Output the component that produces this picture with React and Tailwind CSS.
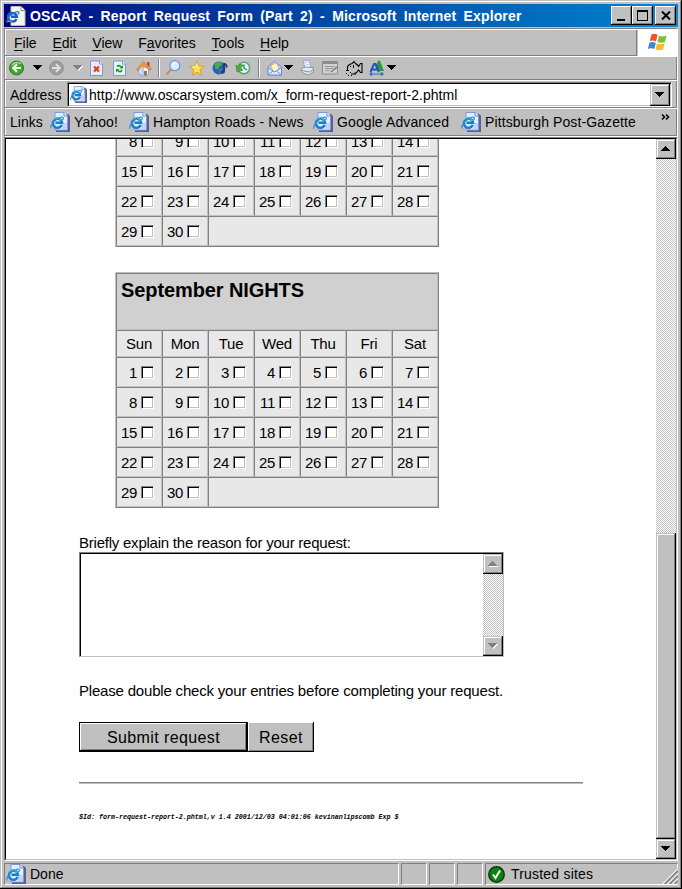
const RAISED =
  "bg-[#c0c0c0] shadow-[inset_-1px_-1px_#000,inset_1px_1px_#c0c0c0,inset_-2px_-2px_#808080,inset_2px_2px_#fff]";
const DITHER =
  "bg-[conic-gradient(#c0c0c0_25%,#fff_0_50%,#c0c0c0_0_75%,#fff_0)] bg-[length:2px_2px]";

function PageIcon({ className = "", size = 20 }) {
  return (
    <svg className={`block shrink-0 ${className}`} width={size} height={size} viewBox="0 0 20 20">
      <path d="M8 2h10l2 2v16H6v-3z" fill="#5d5d91" />
      <path d="M5 .5h9l3.500 3.500v14H5z" fill="#e4efff" stroke="#7b9be0" />
      <path d="M12 11h5v6.500h-5z" fill="#c3d3f8" />
      <path d="M14 .5V4h3.500" fill="#fff" stroke="#6b86d6" />
      <circle cx="7.200" cy="11" r="5.800" fill="#d8f0ff" opacity=".8" />
      <path d="M11.700 12.900a4.600 4.600 0 1 1 .3-2.200H5.500" fill="none" stroke="#1c7cc4" strokeWidth="2.500" />
      <path d="M11.200 8.900a4.700 4.700 0 0 0-8.400-.6" fill="none" stroke="#4fbdf0" strokeWidth="1.200" />
      <path d="M1 16.500C-.4 13 7 5.500 12 5c2 0 1.500 2 .4 3" fill="none" stroke="#2d8fd8" strokeWidth="1.200" />
    </svg>
  );
}

function Triangle({ className = "", up = false, color = "#000", lit = false, w = 9 }) {
  const h = (w + 1) / 2;
  const d = up ? `M0 ${h}h${w}L${w / 2} 0z` : `M0 0h${w}L${w / 2} ${h}z`;
  return (
    <svg className={`block shrink-0 ${className}`} width={w + 1} height={h + 1} shapeRendering="crispEdges">
      {lit && <path d={d} fill="#fff" transform="translate(1 1)" />}
      <path d={d} fill={color} />
    </svg>
  );
}

function ToolIcon({ className = "", w = 16, children }) {
  return (
    <svg className={`block shrink-0 ${className}`} width={w} height="16" viewBox={`0 0 ${w} 16`} fill="none">
      {children}
    </svg>
  );
}

function Separator({ className = "" }) {
  return <div className={`h-[18px] w-[2px] shrink-0 border-l border-[#808080] bg-white ${className}`} />;
}

function TitleBar() {
  const btn =
    "flex h-[19px] items-center justify-center bg-[#c0c0c0] shadow-[inset_-1px_-1px_#000,inset_1px_1px_#fff,inset_-2px_-2px_#808080]";
  return (
    <div className="flex h-[23px] items-center bg-linear-to-r from-[#000080] to-[#1084d0] pr-[2px]">
      <svg className="ml-[2px] block shrink-0" width="20" height="20" viewBox="0 0 20 20">
        <path d="M5 .5h10l4 4v15H5z" fill="#f6f6f0" stroke="#b8b8a8" />
        <path d="M15 .5v4h4" fill="#fff" stroke="#8a8a80" />
        <circle cx="6.500" cy="11" r="5.200" fill="#e8f4ff" />
        <path d="M10.500 12.900a4.300 4.300 0 1 1 .3-2.200H5" stroke="#1560c4" strokeWidth="2.500" fill="none" />
        <path d="M.7 16c-1-3 6-10 11-10.500 2 0 1 2 .3 3" stroke="#2a70d8" strokeWidth="1.200" fill="none" />
        <path d="M1 16l3-1 3 2" stroke="#e8a020" strokeWidth="1" fill="none" />
      </svg>
      <div className="ml-1 grow pt-px text-[14px] leading-5 font-bold tracking-[0.15px] whitespace-nowrap text-white [word-spacing:3.2px]">
        OSCAR - Report Request Form (Part 2) - Microsoft Internet Explorer
      </div>
      <div className={`w-[21px] ${btn}`}>
        <div className="mt-[9px] mr-[2px] h-[2px] w-[8px] bg-black" />
      </div>
      <div className={`w-[21px] ${btn}`}>
        <div className="h-[11px] w-[11px] border border-t-2 border-black" />
      </div>
      <div className={`ml-[2px] w-[21px] ${btn}`}>
        <svg width="10" height="9" viewBox="0 0 10 9">
          <path d="M1 .5l8 8M9 .5l-8 8" stroke="#000" strokeWidth="2" />
        </svg>
      </div>
    </div>
  );
}

function MenuBar() {
  const items = [
    ["", "F", "ile"],
    ["", "E", "dit"],
    ["", "V", "iew"],
    ["F", "a", "vorites"],
    ["", "T", "ools"],
    ["", "H", "elp"],
  ];
  return (
    <div className="flex h-[26px] justify-between">
      <div className="flex grow items-center gap-[15.8px] border-r border-b border-[#808080] pt-[2px] pl-[9px] text-[14px]">
        {items.map(([a, u, b]) => (
          <span key={u + b}>
            {a}
            <span className="underline underline-offset-2">{u}</span>
            {b}
          </span>
        ))}
      </div>
      <div className="ml-px flex w-[39px] items-center justify-center bg-white pb-[3px]">
        <svg width="21" height="18" viewBox="0 0 21 18">
          <path d="M4.500 1.500Q8 0 10.500 2L9 8.500Q6 7 2.800 8z" fill="#ee5426" />
          <path d="M12 2.800q3 1.500 7.500 0L18 9q-3.500 1.500-7.500 0z" fill="#7cbf3a" />
          <path d="M2.500 9.500Q6 8.200 8.800 10l-1.500 6Q4 14.500.8 16z" fill="#4384dd" />
          <path d="M10 10.500q3.500 1.500 7.700 0l-1.500 5.700q-3.500 1.800-7.700 0z" fill="#f7bd28" />
        </svg>
      </div>
    </div>
  );
}

function ToolBar() {
  return (
    <div className="flex h-[24px] items-center border-t border-b border-t-white border-b-[#808080] pl-[4px]">
      <ToolIcon>
        <circle cx="7.500" cy="8" r="7" fill="#3fa82d" stroke="#257a1b" />
        <path d="M3 5a6 6 0 0 1 9-1" stroke="#a3df8e" strokeWidth="1.500" />
        <path d="M12 8H4.500M8 4.200L4.200 8 8 11.800" stroke="#fff" strokeWidth="2" />
      </ToolIcon>
      <Triangle className="ml-[8px]" />
      <ToolIcon className="ml-[6px]">
        <circle cx="7.500" cy="8" r="6.800" fill="#a0a0a0" stroke="#8a8a8a" />
        <path d="M3 8h7.500M7 4.200L10.800 8 7 11.800" stroke="#e2e2e2" strokeWidth="1.800" />
      </ToolIcon>
      <Triangle className="ml-[8px]" color="#808080" lit />
      <ToolIcon className="ml-[7px]" w={14}>
        <path d="M.5 1h9l3 3v11.500H.5z" fill="#e3edff" stroke="#7999d8" />
        <path d="M9.500 1v3h3" fill="#fff" stroke="#7999d8" />
        <path d="M4 6.500l5 5M9 6.500l-5 5" stroke="#e63a16" strokeWidth="2.200" />
      </ToolIcon>
      <ToolIcon className="ml-[9px]" w={14}>
        <path d="M.5 1h9l3 3v11.500H.5z" fill="#e3f5ee" stroke="#7999d8" />
        <path d="M9.500 1v3h3" fill="#fff" stroke="#7999d8" />
        <path d="M4 6.500Q6 4.500 8 7M9 10q-2 3-4 .5" stroke="#129a28" strokeWidth="1.600" />
        <path d="M6.500 8.500H10V5zM6.500 9H3v3.500z" fill="#129a28" />
      </ToolIcon>
      <ToolIcon className="ml-[9px]">
        <path d="M11 2h2.500v5H11z" fill="#c44532" />
        <path d="M7 6.500l5.500 2V15L6 16z" fill="#f9fbff" stroke="#90a9dc" />
        <path d="M2 9l5-5v12l-4-2z" fill="#d2e0fb" stroke="#90a9dc" />
        <path d="M.5 9.500L7.500 1.500l8 7.500-2 1-6-5L2 11z" fill="#f59a37" stroke="#d36a1a" strokeWidth=".6" />
        <path d="M8 11h3v4.500H8z" fill="#a9713f" />
      </ToolIcon>
      <Separator className="ml-[6px]" />
      <ToolIcon className="ml-[5px]">
        <path d="M1.500 14.500l4.500-5" stroke="#c3926a" strokeWidth="2.600" />
        <circle cx="9.800" cy="5.700" r="5" fill="#d7eefe" stroke="#6f97de" strokeWidth="1.300" />
        <path d="M7.500 5a3 3 0 0 1 3-2" stroke="#fff" strokeWidth="1.500" />
      </ToolIcon>
      <ToolIcon className="ml-[8px]">
        <path d="M8 .8l2 5.200 5.300.2-4.200 3.500 1.600 5.500L8 12.200l-4.700 3 1.600-5.500L.7 6.200 6 6z" fill="#fee152" stroke="#e2a01a" />
        <path d="M8 3.500L6.800 7l-3.500.2" stroke="#fffbd0" />
      </ToolIcon>
      <ToolIcon className="ml-[7px]">
        <circle cx="7" cy="8" r="6.500" fill="#2460bd" />
        <path d="M2.500 4.500Q5 1 9 2l1 3-3 1.500-.5 3-3-.5zM8 9l3.500 1-2 3.800-2.500-1z" fill="#47af3f" />
        <path d="M12 12V3.500q3 1 2.800 4" stroke="#252b78" strokeWidth="1.400" />
        <ellipse cx="10.500" cy="12" rx="2.400" ry="1.800" fill="#323891" />
      </ToolIcon>
      <ToolIcon className="ml-[7px]">
        <circle cx="8.800" cy="8" r="5.800" fill="#e1f4f5" stroke="#60a668" strokeWidth="1.500" />
        <path d="M9 4.500V8l3 2" stroke="#436687" strokeWidth="1.200" />
        <path d="M1 5l1 7 6-2-2-1.500Q6 6 9 5.500L5 4 3.500 7z" fill="#50ad45" stroke="#2f8731" strokeWidth=".6" />
      </ToolIcon>
      <Separator className="ml-[7px]" />
      <ToolIcon className="ml-[7px]">
        <path d="M1 7l6.500-6 7 6v8H1z" fill="#b6d0fb" stroke="#6c90d8" />
        <path d="M4 5l6-2 2 7-6 2z" fill="#fff7d0" stroke="#e6a754" strokeWidth=".8" />
        <path d="M1 7.500L7.500 12l7-4.500V15H1z" fill="#deebff" stroke="#6c90d8" />
        <path d="M1 15l5-4M14.500 15l-5-4" stroke="#6c90d8" />
      </ToolIcon>
      <Triangle className="ml-px" />
      <ToolIcon className="ml-[6px]">
        <path d="M3 1l6-.5 2 6.500-6 1z" fill="#fff" stroke="#85a5df" />
        <path d="M4 3l4-.5M5 5l4-.5" stroke="#9fbaf0" strokeWidth=".8" />
        <path d="M1 9l4-2 8 .5.5 4.500-5 3L2 12.500z" fill="#e5e9f2" stroke="#8890a5" />
        <path d="M2 10.500l7 1.500 4-2" stroke="#8890a5" />
        <path d="M9 12.500l3-1.500" stroke="#e8b64c" strokeWidth="1.200" />
      </ToolIcon>
      <ToolIcon className="ml-[6px]">
        <path d="M.5 1.500h15V14H.5z" fill="#d2d2d2" stroke="#8c8c8c" />
        <path d="M1 3h14" stroke="#8c8c8c" strokeWidth="2" />
        <path d="M3 6.500h10M3 8.500h8M3 10.500h5" stroke="#9a9a9a" />
        <path d="M15 7l-6 5" stroke="#777" strokeWidth="1.500" />
      </ToolIcon>
      <ToolIcon className="ml-[7px]" w={18}>
        <path
          d="M2.500 10V6.500l2-2L7 3.500l2-2 1.500 2 2 1.500 1 1.500 2-3h1.500v9h-1.500l-2-2.500-2 2.500-2.500 1.500H6"
          stroke="#000"
          strokeWidth="1.100"
        />
        <path
          d="M5 6.500h1M8.500 5v3M1 10.500h3M1 13.500h1M3 15.500h1M6 15.500h1M5 12.500h1M9 13l2 1.500"
          stroke="#000"
        />
      </ToolIcon>
      <ToolIcon className="ml-[6px]" w={16}>
        <path d="M6.500 7L9 .8h2L15 11h-4z" fill="#2f9a36" />
        <path d="M1.500 12L5 4h1.500L10 12M3 9.500h6" stroke="#1b54c4" strokeWidth="2" />
        <path d="M1 14h13M3 12.300L1 14l2 1.700M12 12.300l2 1.700-2 1.700" stroke="#2a6cca" strokeWidth="1.200" />
      </ToolIcon>
      <Triangle className="ml-[2px]" />
    </div>
  );
}

function AddressBar() {
  return (
    <div className="flex h-[28px] border-t border-b border-t-white border-b-[#808080] pt-px pl-[5px] text-[14px]">
      <div className="w-[57px] pt-[4px] leading-[18px]">
        A<span className="underline underline-offset-2">d</span>dress
      </div>
      <div className="flex h-[25px] w-[605px] items-center border border-t-[#808080] border-r-white border-b-white border-l-[#808080] bg-white pr-px shadow-[inset_1px_1px_#000,inset_-1px_-1px_#c0c0c0]">
        <PageIcon className="ml-[2px]" size={17} />
        <div className="ml-[2px] grow pt-[2px] tracking-[0.02px]">http://www.oscarsystem.com/x_form-request-report-2.phtml</div>
        <div className={`mt-px flex h-[22px] w-[20px] items-center justify-center ${RAISED}`}>
          <Triangle />
        </div>
      </div>
    </div>
  );
}

function LinksBar() {
  const link = "tracking-[0.1px] whitespace-nowrap";
  return (
    <div className="flex h-[28px] items-center border-t border-b border-t-white border-b-[#808080] pl-[5px] text-[14px]">
      <span className="w-[40px]">Links</span>
      <PageIcon />
      <span className={`ml-[4px] w-[55px] ${link}`}>Yahoo!</span>
      <PageIcon />
      <span className={`ml-[4px] w-[160px] ${link}`}>Hampton Roads - News</span>
      <PageIcon />
      <span className={`ml-[4px] w-[124px] ${link}`}>Google Advanced</span>
      <PageIcon />
      <span className={`ml-[4px] w-[176px] ${link}`}>Pittsburgh Post-Gazette</span>
      <svg className="mb-[11px] block" width="10" height="6" viewBox="0 0 10 6">
        <path d="M1 .5L3.500 3 1 5.500M5 .5L7.500 3 5 5.500" fill="none" stroke="#000" strokeWidth="1.500" />
      </svg>
    </div>
  );
}

const CELL = "border border-t-[#808080] border-r-[#c0c0c0] border-b-[#c0c0c0] border-l-[#808080]";
const FRAME =
  "ml-[36px] w-[324px] border border-t-[#c0c0c0] border-r-[#808080] border-b-[#808080] border-l-[#c0c0c0] bg-[#e8e8e8]";

function Day({ n }) {
  return (
    <div className={`flex h-[30px] justify-end pt-[8px] pr-[7px] ${CELL}`}>
      <span className="mr-[4px] text-[15px] leading-[13px] tracking-[-0.3px]">{n}</span>
      <span className="block h-[13px] w-[13px] border border-t-[#808080] border-r-white border-b-white border-l-[#808080] bg-white shadow-[inset_1px_1px_#000,inset_-1px_-1px_#c0c0c0]" />
    </div>
  );
}

function Days({ from }) {
  const days = Array.from({ length: 31 - from }, (_, i) => from + i);
  return (
    <div className="grid grid-cols-7">
      {days.map((n) => (
        <Day key={n} n={n} />
      ))}
      <div className={`col-span-5 h-[30px] ${CELL}`} />
    </div>
  );
}

function Page() {
  return (
    <div className="grow overflow-hidden bg-white pl-[73px] text-[15px]">
      <div className={`-mt-[13px] border-t-0 ${FRAME}`}>
        <Days from={8} />
      </div>
      <div className={`mt-[25px] ${FRAME}`}>
        <div className={`h-[57px] bg-[#d0d0d0] pt-[4px] pl-[4px] text-[20px] leading-6 font-bold tracking-[-0.1px] ${CELL}`}>
          September NIGHTS
        </div>
        <div className="grid grid-cols-7">
          {["Sun", "Mon", "Tue", "Wed", "Thu", "Fri", "Sat"].map((d) => (
            <div key={d} className={`h-[27px] text-center leading-[26px] tracking-[-0.2px] ${CELL}`}>
              {d}
            </div>
          ))}
        </div>
        <Days from={1} />
      </div>

      <div className="mt-[25px] h-[19px] leading-[20px] tracking-[-0.23px]">
        Briefly explain the reason for your request:
      </div>
      <div className="flex h-[105px] w-[425px] justify-end border border-t-[#808080] border-r-[#c0c0c0] border-b-[#c0c0c0] border-l-[#808080] pt-px shadow-[inset_1px_1px_#000]">
        <div className={`flex w-[20px] flex-col justify-between ${DITHER}`}>
          <div className={`flex h-[20px] items-center justify-center ${RAISED}`}>
            <Triangle up lit color="#808080" />
          </div>
          <div className={`flex h-[20px] items-center justify-center ${RAISED}`}>
            <Triangle lit color="#808080" />
          </div>
        </div>
      </div>
      <div className="mt-[24px] h-[20px] leading-[20px] tracking-[-0.19px]">
        Please double check your entries before completing your request.
      </div>
      <div className="mt-[21px] flex h-[30px] text-[16px] tracking-[0.4px]">
        <div className="flex w-[169px] items-center justify-center border border-black bg-[#c0c0c0] pt-px shadow-[inset_-1px_-1px_#000,inset_1px_1px_#fff,inset_-2px_-2px_#808080]">
          Submit request
        </div>
        <div className="flex w-[66px] items-center justify-center bg-[#c0c0c0] pt-px shadow-[inset_-1px_-1px_#000,inset_1px_1px_#fff,inset_-2px_-2px_#808080]">
          Reset
        </div>
      </div>
      <div className="mt-[30px] h-[2px] w-[504px] border-t border-[#808080] bg-[#c0c0c0]" />
      <div className="mt-[28px] font-['Liberation_Mono',monospace] text-[6.67px] leading-[10px] font-bold whitespace-nowrap italic">
        $Id: form-request-report-2.phtml,v 1.4 2001/12/03 04:01:06 kevinanlipscomb Exp $
      </div>
    </div>
  );
}

function ScrollBar() {
  return (
    <div className={`flex w-[20px] shrink-0 flex-col ${DITHER}`}>
      <div className={`flex h-[20px] items-center justify-center ${RAISED}`}>
        <Triangle up />
      </div>
      <div className="h-[374px]" />
      <div className={`h-[306px] ${RAISED}`} />
      <div className={`flex h-[20px] items-center justify-center ${RAISED}`}>
        <Triangle />
      </div>
    </div>
  );
}

function StatusBar() {
  const pane = "h-[22px] border border-t-[#808080] border-r-white border-b-white border-l-[#808080]";
  return (
    <div className="mt-[2px] flex h-[22px] gap-[2px] text-[14px]">
      <div className={`flex w-[395px] items-center ${pane}`}>
        <PageIcon className="ml-px" />
        <span className="ml-[4px]">Done</span>
      </div>
      <div className={`w-[26px] ${pane}`} />
      <div className={`w-[26px] ${pane}`} />
      <div className={`w-[26px] ${pane}`} />
      <div className={`flex grow items-center ${pane}`}>
        <svg className="ml-[2px] block" width="17" height="17" viewBox="0 0 17 17">
          <circle cx="8.500" cy="8.500" r="7.700" fill="#108010" stroke="#063c06" strokeWidth="1.500" />
          <path d="M5 8.500L7.500 12 12 4.500" fill="none" stroke="#fff" strokeWidth="2" />
        </svg>
        <span className="ml-[6px] grow tracking-[0.2px]">Trusted sites</span>
        <svg className="-mr-px block self-end bg-[#c0c0c0]" width="16" height="16" viewBox="0 0 16 16">
          <path d="M1 16L16 1M6 16L16 6M11 16l5-5" stroke="#fff" strokeWidth="1.300" />
          <path d="M2.500 16L16 2.500M7.500 16L16 7.500M12.500 16l3.500-3.500" stroke="#808080" strokeWidth="1.600" />
        </svg>
      </div>
    </div>
  );
}

export default function App() {
  return (
    <div className="flex h-[889px] w-[682px] flex-col overflow-hidden bg-[#c0c0c0] p-[4px] font-['Liberation_Sans',Arial,sans-serif] text-black shadow-[inset_-1px_-1px_#000,inset_1px_1px_#c0c0c0,inset_-2px_-2px_#808080,inset_2px_2px_#fff]">
      <TitleBar />
      <div className="mt-px flex h-[109px] flex-col border border-t-[#808080] border-r-white border-b-white border-l-[#808080] pt-px shadow-[inset_1px_1px_#fff,inset_-1px_0_#808080]">
        <MenuBar />
        <ToolBar />
        <AddressBar />
        <LinksBar />
      </div>
      <div className="flex h-[724px] border border-t-[#808080] border-r-white border-b-white border-l-[#808080]">
        <div className="flex grow border border-t-black border-r-[#c0c0c0] border-b-[#c0c0c0] border-l-black">
          <Page />
          <ScrollBar />
        </div>
      </div>
      <StatusBar />
    </div>
  );
}
